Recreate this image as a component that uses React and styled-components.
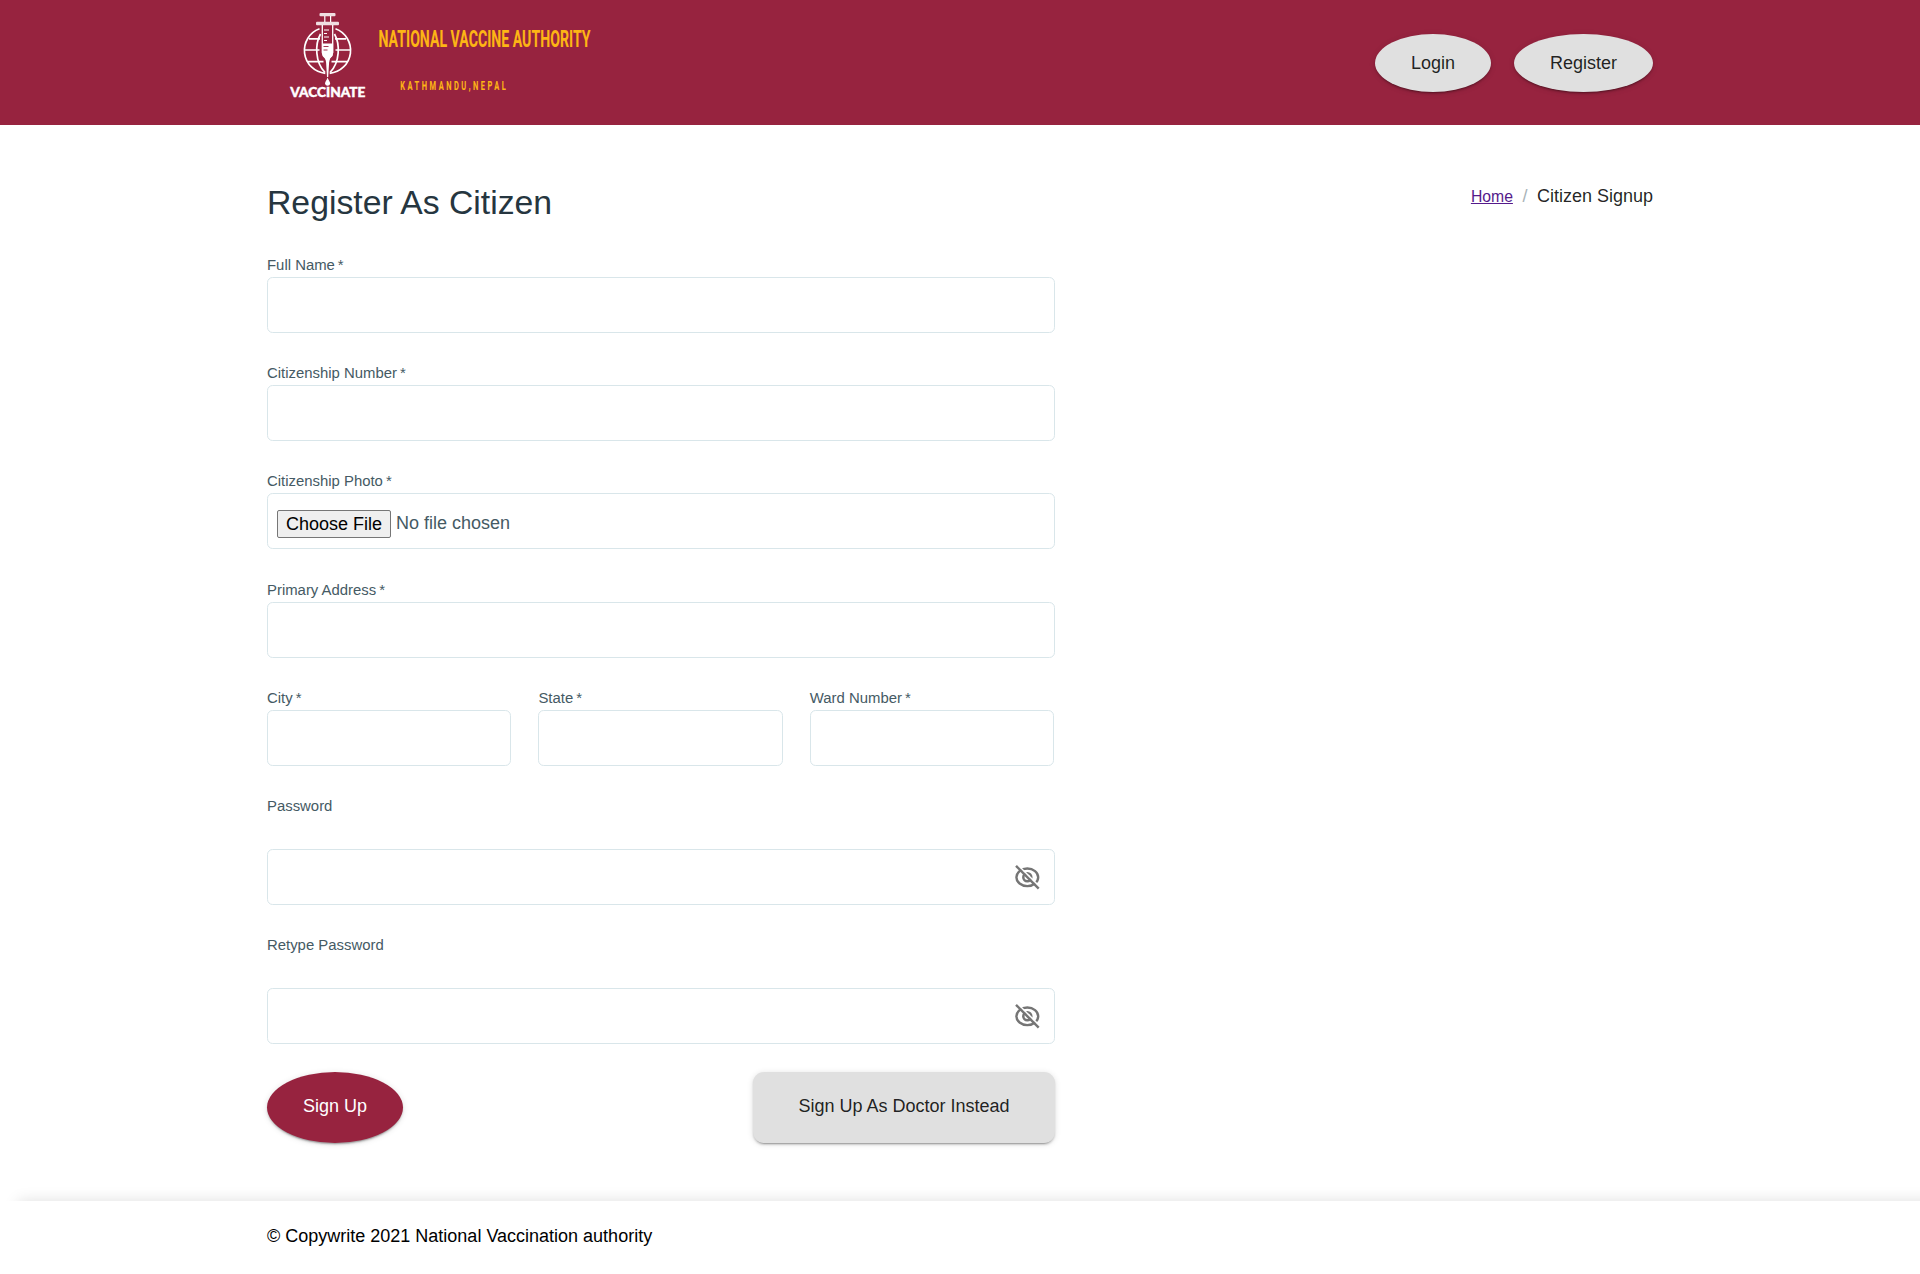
import React, { useState } from "react";
import styled, { createGlobalStyle, css } from "styled-components";

const GlobalStyle = createGlobalStyle`
  * { box-sizing: border-box; }
  body {
    margin: 0;
    background: #fff;
    color: #000;
    font-family: "Liberation Sans", Arial, sans-serif;
    font-size: 18px;
    overflow-x: hidden;
  }
`;

const Page = styled.div`
  display: flex;
  flex-direction: column;
  height: 1274px;
  overflow: hidden;
`;

const Header = styled.header`
  flex: none;
  height: 125px;
  padding: 0 267px;
  display: flex;
  justify-content: space-between;
  background: #97233f;
`;

const Logo = styled.svg`
  display: block;
  width: 500px;
  height: 125px;
`;

const HeaderActions = styled.nav`
  display: flex;
  gap: 23px;
  padding-top: 34px;
`;

const Button = styled.button`
  height: ${(p) => p.$height}px;
  width: ${(p) => p.$width}px;
  padding: 0 0 ${(p) => (p.$height > 60 ? 2 : 0)}px;
  border: 0;
  border-radius: ${(p) => (p.$round ? "50%" : "11px")};
  font: inherit;
  line-height: 1;
  cursor: pointer;
  color: ${(p) => (p.$primary ? "#fff" : "rgba(0, 0, 0, 0.87)")};
  background: ${(p) => (p.$primary ? "#97233f" : "#e0e0e0")};
  box-shadow: 0 3px 1px -2px rgba(0, 0, 0, 0.2), 0 2px 2px 0 rgba(0, 0, 0, 0.14),
    0 1px 6px 0 rgba(0, 0, 0, 0.12);
`;

const Main = styled.main`
  display: flex;
  justify-content: space-between;
  align-items: flex-start;
  padding: 58px 267px 0;
`;

const Form = styled.form`
  width: 788px;
`;

const Title = styled.h1`
  margin: -1px 0 32.9px;
  font-size: 33.75px;
  line-height: 40px;
  font-weight: 400;
  color: #263640;
`;

const Breadcrumb = styled.nav`
  display: flex;
  align-items: baseline;
  line-height: 26px;
  color: rgba(0, 0, 0, 0.87);
`;

const HomeLink = styled.a`
  font-size: 15.75px;
  color: #551a8b;
  text-decoration: underline;
`;

const Separator = styled.span`
  margin: 0 9.500px;
  color: #a9b3b8;
`;

const FieldBox = styled.div`
  display: flex;
  flex-direction: column;
  flex: 1;
  margin-bottom: 30.25px;
`;

const Label = styled.label`
  height: 22px;
  margin-bottom: ${(p) => (p.$spaced ? 31 : 0)}px;
  font-size: 14.9px;
  line-height: 20px;
  color: #455a64;
`;

const Required = styled.span`
  margin-left: 3px;
`;

const control = css`
  width: 100%;
  height: 56px;
  border: 1px solid #d9e6ea;
  border-radius: 5.6px;
  background: #fff;
`;

const Input = styled.input`
  ${control}
  padding: 0 9px;
  font: inherit;
  outline: none;
`;

const FileControl = styled.div`
  ${control}
  display: flex;
  align-items: center;
  gap: 5px;
  padding: 5px 9px 0;
  color: #455a64;
`;

const FileButton = styled.button`
  width: 114px;
  height: 28px;
  padding: 0;
  border: 1px solid #767676;
  border-radius: 2px;
  background: #efefef;
  color: #000;
  font: inherit;
  line-height: 26px;
`;

const FileStatus = styled.span`
  line-height: 26px;
  margin-top: -2px;
`;

const PasswordControl = styled.div`
  ${control}
  display: flex;
  align-items: center;
  padding-right: 13px;
`;

const BareInput = styled.input`
  flex: 1;
  height: 100%;
  padding: 0 9px;
  border: 0;
  outline: none;
  background: transparent;
  font: inherit;
`;

const IconButton = styled.button`
  display: flex;
  padding: 0;
  border: 0;
  background: none;
  color: #757575;
`;

const Row = styled.div`
  display: flex;
  gap: 27.2px;
  width: 787px;
`;

const Actions = styled.div`
  display: flex;
  justify-content: space-between;
  margin-top: -2.7px;
`;

const Footer = styled.footer`
  flex: 1;
  margin-top: 58px;
  padding: 22px 267px 0;
  line-height: 26px;
  background: #fff;
  box-shadow: 18px 0 14px rgba(0, 0, 0, 0.13);
`;

function BrandLogo() {
  return (
    <Logo viewBox="267 0 500 125" role="img" aria-label="Vaccinate">
      <g fill="none" stroke="#fff" strokeWidth="1.7">
        <path d="M319.5 28.8a23 23 0 0 0 5.8 44.5M335.5 28.8a23 23 0 0 1-5.8 44.5" />
        <path d="M320.5 34c-5.6 10-5.6 28 4.5 38.5M334.5 34c5.6 10 5.6 28-4.5 38.5" />
        <path d="M309 38.8h11M335 38.8h11M304.5 50h15M335.5 50h15M308 61.7h15.5M331.5 61.7H347" />
        <path d="M324.8 16v6M330.6 16v6" strokeWidth="1.2" />
        <path d="M322.3 25v27.5q0 3 3 5.5l2.2 3 2.2-3q3-2.500 3-5.500V25" strokeWidth="1.3" />
        <path d="M324 30h5M324 33.500h3M324 37h5M324 40.500h3" strokeWidth="1" />
      </g>
      <g fill="#fff">
        <rect x="319.500" y="13" width="16" height="3.200" rx="1" fillOpacity=".85" />
        <rect x="316" y="21.700" width="23" height="3.500" rx="1" fillOpacity=".85" />
        <path d="M322.300 43.500h10.800V53q0 3-3 5l-1 4.500-.900 14.500h-1.200l-.900-14.500-.900-4.500q-3-2-3-5z" />
        <path d="M327.600 77.500c.7 2.500 2.600 4 2.600 6.300a2.700 2.700 0 0 1-5.200 0c0-2.300 1.900-3.800 2.600-6.300z" />
      </g>
      <path d="M323.500 46.500h5M323.500 50h4" stroke="#97233f" strokeWidth=".9" />
      <text
        x="290.300"
        y="97"
        fill="#fff"
        stroke="#fff"
        strokeWidth=".4"
        fontFamily="Lato, sans-serif"
        fontWeight="900"
        fontSize="12.500"
        textLength="75"
        lengthAdjust="spacingAndGlyphs"
      >
        VACCINATE
      </text>
      <g fill="#fdb515" stroke="#fdb515" fontFamily="Roboto, sans-serif" fontWeight="700">
        <text
          x="378.500"
          y="47.200"
          fontSize="23"
          strokeWidth=".1"
          textLength="212"
          lengthAdjust="spacingAndGlyphs"
        >
          NATIONAL VACCINE AUTHORITY
        </text>
        <text
          x="400.300"
          y="89.500"
          fontSize="12"
          strokeWidth=".1"
          letterSpacing="4"
          textLength="108"
          lengthAdjust="spacingAndGlyphs"
        >
          KATHMANDU,NEPAL
        </text>
      </g>
    </Logo>
  );
}

function EyeOffIcon() {
  return (
    <svg width="27" height="27" viewBox="0 0 27 27" fill="none" aria-hidden="true">
      <ellipse cx="13.300" cy="13.300" rx="10.900" ry="8.800" stroke="currentColor" strokeWidth="2.400" />
      <circle cx="13.300" cy="13.300" r="4" stroke="currentColor" strokeWidth="2.500" />
      <path d="M4.800 2 25.500 22.700" stroke="#fff" strokeWidth="1.700" />
      <path d="M2 1.900 24.700 24.600" stroke="currentColor" strokeWidth="2.400" />
    </svg>
  );
}

function Field({ id, label, children }) {
  return (
    <FieldBox>
      <Label htmlFor={id}>
        {label}
        <Required>*</Required>
      </Label>
      {children || <Input id={id} />}
    </FieldBox>
  );
}

function PasswordField({ id, label }) {
  const [visible, setVisible] = useState(false);
  return (
    <FieldBox>
      <Label htmlFor={id} $spaced>
        {label}
      </Label>
      <PasswordControl>
        <BareInput id={id} type={visible ? "text" : "password"} />
        <IconButton type="button" aria-label="Toggle password" onClick={() => setVisible(!visible)}>
          <EyeOffIcon />
        </IconButton>
      </PasswordControl>
    </FieldBox>
  );
}

export default function App() {
  return (
    <Page>
      <GlobalStyle />
      <Header>
        <BrandLogo />
        <HeaderActions>
          <Button $round $width={116} $height={58}>Login</Button>
          <Button $round $width={139} $height={58}>Register</Button>
        </HeaderActions>
      </Header>
      <Main>
        <Form onSubmit={(e) => e.preventDefault()}>
          <Title>Register As Citizen</Title>
          <Field id="name" label="Full Name" />
          <Field id="number" label="Citizenship Number" />
          <Field id="photo" label="Citizenship Photo">
            <FileControl>
              <FileButton id="photo" type="button">Choose File</FileButton>
              <FileStatus>No file chosen</FileStatus>
            </FileControl>
          </Field>
          <Field id="address" label="Primary Address" />
          <Row>
            <Field id="city" label="City" />
            <Field id="state" label="State" />
            <Field id="ward" label="Ward Number" />
          </Row>
          <PasswordField id="password" label="Password" />
          <PasswordField id="retype" label="Retype Password" />
          <Actions>
            <Button $round $primary $width={136} $height={71}>Sign Up</Button>
            <Button type="button" $width={302} $height={71}>Sign Up As Doctor Instead</Button>
          </Actions>
        </Form>
        <Breadcrumb>
          <HomeLink href="#">Home</HomeLink>
          <Separator>/</Separator>
          Citizen Signup
        </Breadcrumb>
      </Main>
      <Footer>© Copywrite 2021 National Vaccination authority</Footer>
    </Page>
  );
}
